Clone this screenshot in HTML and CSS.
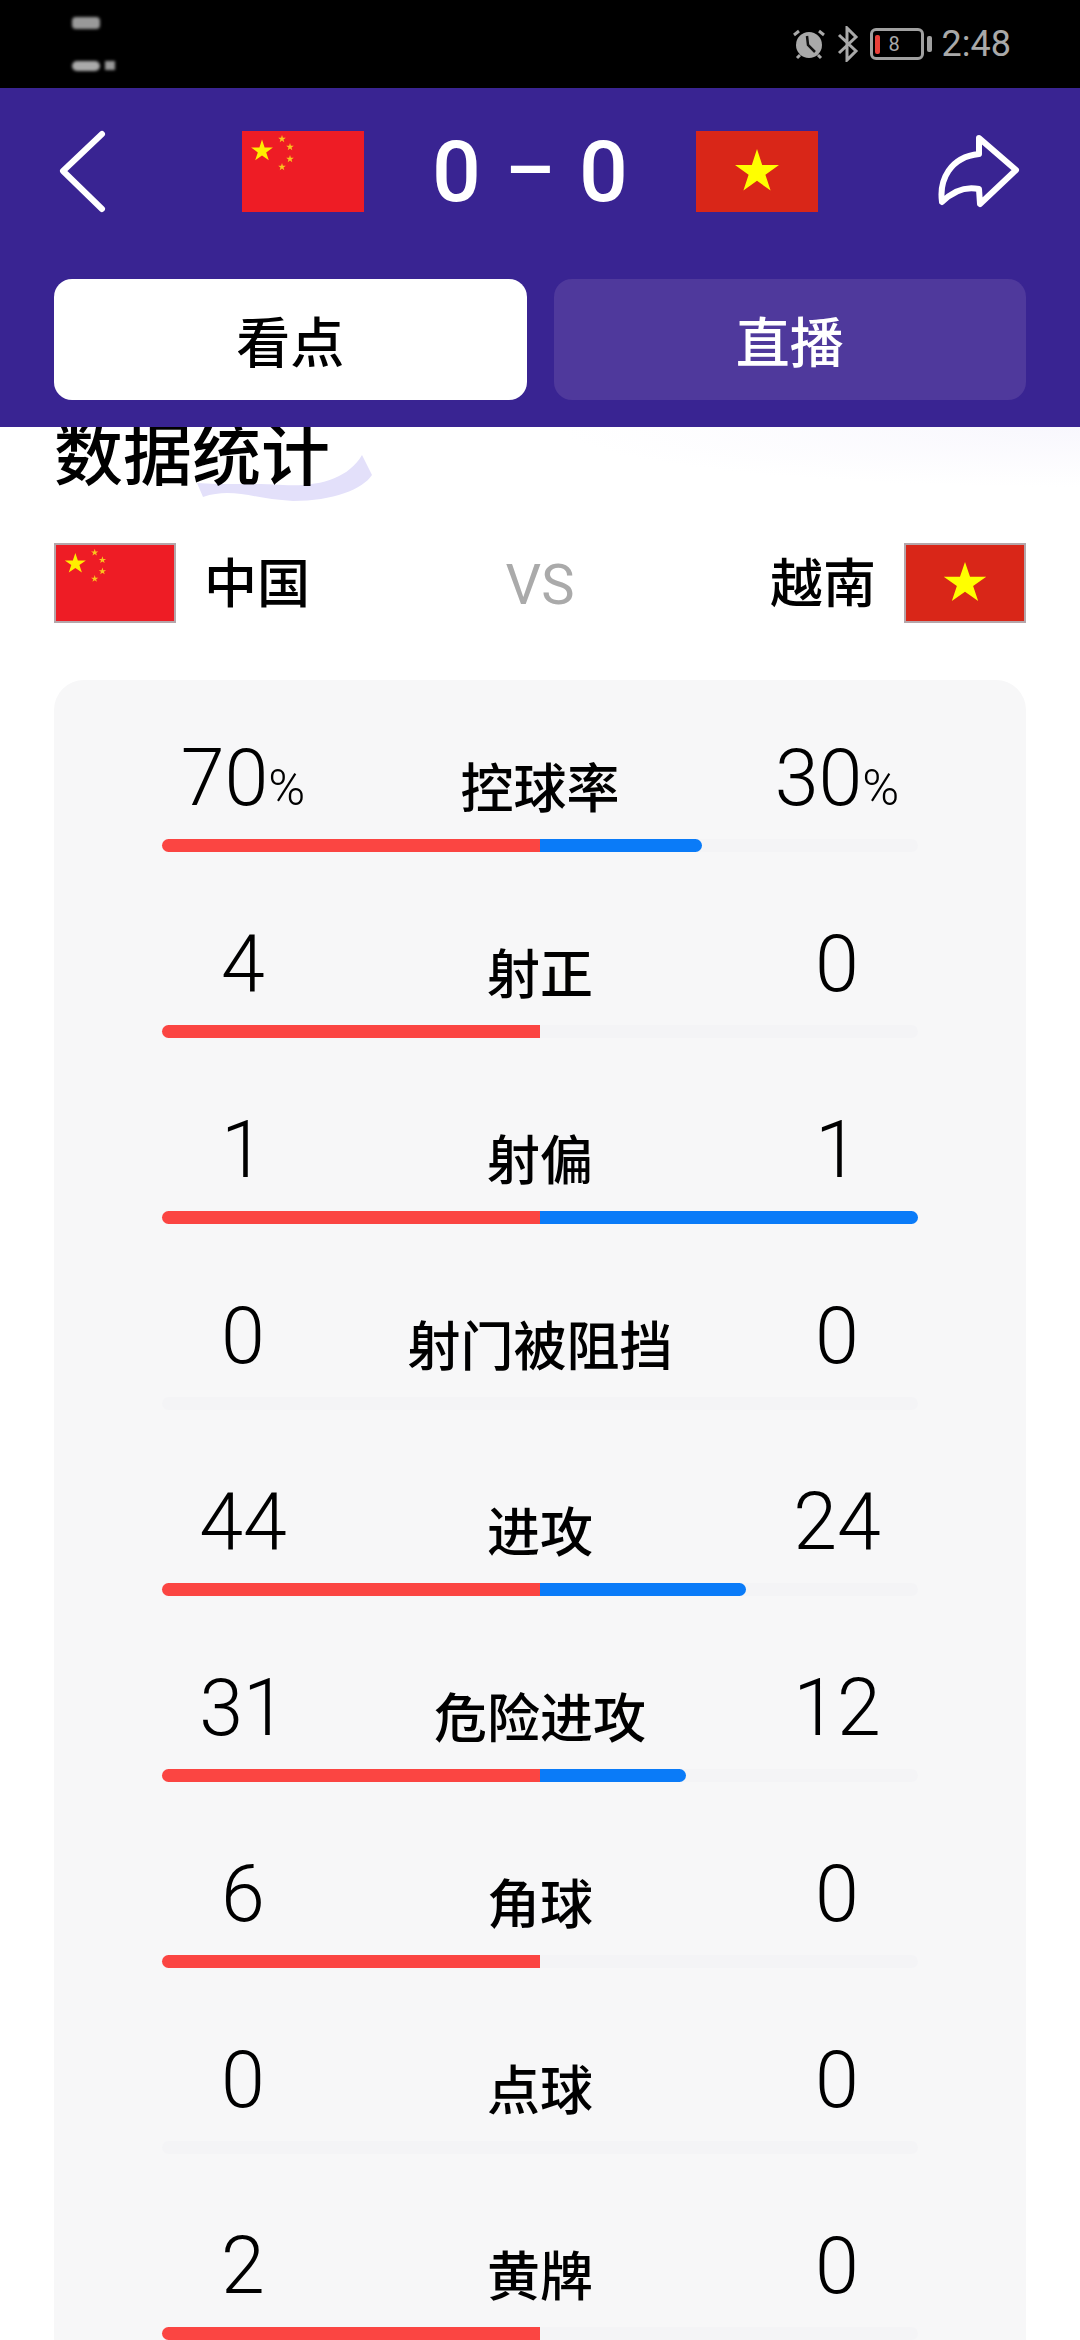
FILE: index.html
```html
<!DOCTYPE html>
<html lang="zh-CN">
  <head>
    <meta charset="UTF-8" />
    <meta name="viewport" content="width=device-width, initial-scale=1.0" />
    <title>数据统计</title>
    <link rel="stylesheet" href="styles.css">
  </head>
  <body>
    <svg class="defs" width="0" height="0">
      <symbol id="flag-cn" viewBox="0 0 122 81" preserveAspectRatio="none">
        <rect width="122" height="81" fill="#ee1c25" />
        <polygon fill="#ffee00" points="20,8.5 22.6,16.4 30.9,16.4 24.2,21.4 26.8,29.3 20,24.4 13.2,29.3 15.8,21.4 9.1,16.4 17.4,16.4" />
        <polygon fill="#f9c51e" points="40,4 40.9,6.8 43.8,6.8 41.5,8.5 42.3,11.3 40,9.6 37.7,11.3 38.5,8.5 36.2,6.8 39.1,6.8" />
        <polygon fill="#f9c51e" points="48,12 48.9,14.8 51.8,14.8 49.5,16.5 50.3,19.3 48,17.6 45.7,19.3 46.5,16.5 44.2,14.8 47.1,14.8" />
        <polygon fill="#f9c51e" points="48,24 48.9,26.8 51.8,26.8 49.5,28.5 50.3,31.3 48,29.6 45.7,31.3 46.5,28.5 44.2,26.8 47.1,26.8" />
        <polygon fill="#f9c51e" points="40,32 40.9,34.8 43.8,34.8 41.5,36.5 42.3,39.3 40,37.6 37.7,39.3 38.5,36.5 36.2,34.8 39.1,34.8" />
      </symbol>
      <symbol id="flag-vn" viewBox="0 0 122 81" preserveAspectRatio="none">
        <rect width="122" height="81" fill="#d92618" />
        <polygon fill="#ffff00" points="61,18 66.2,33.9 83,33.9 69.4,43.7 74.6,59.6 61,49.8 47.4,59.6 52.6,43.7 39,33.9 55.8,33.9" />
      </symbol>
    </svg>

    <div class="status-bar">
      <div class="notify">
        <div class="notify-top"></div>
        <div class="notify-bottom">
          <div class="notify-pill"></div>
          <div class="notify-dot"></div>
        </div>
      </div>
      <div class="status-right">
        <svg class="alarm" width="34" height="32" viewBox="0 0 34 32">
          <circle cx="17" cy="17" r="13" fill="#a9a9a9" />
          <path d="M15 8 L16 17 L23 24" fill="none" stroke="#111" stroke-width="2.5" />
          <path d="M2 7 L7 3 M32 7 L27 3 M5 30 L8 27 M29 30 L26 27" fill="none" stroke="#a9a9a9" stroke-width="3" />
        </svg>
        <svg class="bt" width="22" height="36" viewBox="0 0 22 36">
          <path d="M2 9 L19 25 L10 34 L10 2 L19 11 L2 27" fill="none" stroke="#a9a9a9" stroke-width="3" />
        </svg>
        <div class="battery">
          <div class="battery-level"></div>
          <div class="battery-num">8</div>
        </div>
        <div class="battery-nub"></div>
        <div class="clock">2:48</div>
      </div>
    </div>

    <div class="header">
      <div class="score-row">
        <svg class="back" width="70" height="81" viewBox="0 0 70 81">
          <path d="M48 3 L9 40 L48 78" fill="none" stroke="#fff" stroke-width="6" stroke-linecap="round" stroke-linejoin="round" />
        </svg>
        <div class="score-group">
          <svg class="score-flag" width="122" height="81"><use href="#flag-cn" /></svg>
          <div class="score"><span>0</span><span class="dash">–</span><span>0</span></div>
          <svg class="score-flag" width="122" height="81"><use href="#flag-vn" /></svg>
        </div>
        <svg class="share" width="90" height="81" viewBox="0 0 90 81">
          <path d="M43 7 L80 39 L44 73 L43 58 C29 55 16 61 6 71 C3 49 14 26 43 23 Z" fill="none" stroke="#fff" stroke-width="6" stroke-linejoin="round" />
        </svg>
      </div>
      <div class="tabs">
        <div class="tab active">看点</div>
        <div class="tab">直播</div>
      </div>
    </div>

    <div class="content">
      <div class="section-title">
        <svg class="swoosh" width="190" height="50" viewBox="0 0 190 50">
          <path d="M4 28 L10 42 C40 32 60 44 100 46 C140 46 170 34 179 20 L169 0 C155 24 125 32 90 30 C50 28 30 30 4 28 Z" fill="#e3e0fa" />
        </svg>
        <h2>数据统计</h2>
      </div>

      <div class="teams">
        <div class="team">
          <svg class="team-flag" width="122" height="80"><use href="#flag-cn" /></svg>
          <span class="team-name">中国</span>
        </div>
        <div class="vs">VS</div>
        <div class="team team-right">
          <span class="team-name">越南</span>
          <svg class="team-flag" width="122" height="80"><use href="#flag-vn" /></svg>
        </div>
      </div>

      <div class="stats">
        <div class="stat-row">
          <div class="num">70<small>%</small></div>
          <div class="label">控球率</div>
          <div class="num">30<small>%</small></div>
          <div class="bar">
            <div class="half left"><div class="fill-home" style="width: 100%"></div></div>
            <div class="half"><div class="fill-away" style="width: 42.9%"></div></div>
          </div>
        </div>
        <div class="stat-row">
          <div class="num">4</div>
          <div class="label">射正</div>
          <div class="num">0</div>
          <div class="bar">
            <div class="half left"><div class="fill-home" style="width: 100%"></div></div>
            <div class="half"></div>
          </div>
        </div>
        <div class="stat-row">
          <div class="num">1</div>
          <div class="label">射偏</div>
          <div class="num">1</div>
          <div class="bar">
            <div class="half left"><div class="fill-home" style="width: 100%"></div></div>
            <div class="half"><div class="fill-away" style="width: 100%"></div></div>
          </div>
        </div>
        <div class="stat-row">
          <div class="num">0</div>
          <div class="label">射门被阻挡</div>
          <div class="num">0</div>
          <div class="bar">
            <div class="half left"></div>
            <div class="half"></div>
          </div>
        </div>
        <div class="stat-row">
          <div class="num">44</div>
          <div class="label">进攻</div>
          <div class="num">24</div>
          <div class="bar">
            <div class="half left"><div class="fill-home" style="width: 100%"></div></div>
            <div class="half"><div class="fill-away" style="width: 54.5%"></div></div>
          </div>
        </div>
        <div class="stat-row">
          <div class="num">31</div>
          <div class="label">危险进攻</div>
          <div class="num">12</div>
          <div class="bar">
            <div class="half left"><div class="fill-home" style="width: 100%"></div></div>
            <div class="half"><div class="fill-away" style="width: 38.7%"></div></div>
          </div>
        </div>
        <div class="stat-row">
          <div class="num">6</div>
          <div class="label">角球</div>
          <div class="num">0</div>
          <div class="bar">
            <div class="half left"><div class="fill-home" style="width: 100%"></div></div>
            <div class="half"></div>
          </div>
        </div>
        <div class="stat-row">
          <div class="num">0</div>
          <div class="label">点球</div>
          <div class="num">0</div>
          <div class="bar">
            <div class="half left"></div>
            <div class="half"></div>
          </div>
        </div>
        <div class="stat-row">
          <div class="num">2</div>
          <div class="label">黄牌</div>
          <div class="num">0</div>
          <div class="bar">
            <div class="half left"><div class="fill-home" style="width: 100%"></div></div>
            <div class="half"></div>
          </div>
        </div>
      </div>
    </div>
  </body>
</html>
```

FILE: styles.css
```css
* {
  margin: 0;
  padding: 0;
  box-sizing: border-box;
}

html,
body {
  height: 2340px;
  overflow: hidden;
}

body {
  width: 1080px;
  background: white;
  color: black;
  font-family: Roboto, "Noto Sans CJK SC", sans-serif;
  display: flex;
  flex-direction: column;
}

.defs {
  display: block;
  height: 0;
  flex: none;
}

/* status bar */

.status-bar {
  height: 88px;
  flex: none;
  background: black;
  display: flex;
  align-items: center;
  justify-content: space-between;
  padding: 0 69px 0 72px;
}

.notify {
  width: 46px;
  height: 54px;
  display: flex;
  flex-direction: column;
  justify-content: space-between;
  filter: blur(1.5px);
}

.notify-top {
  width: 28px;
  height: 12px;
  background: #999;
  border-radius: 4px;
}

.notify-bottom {
  display: flex;
  gap: 5px;
}

.notify-pill {
  width: 28px;
  height: 10px;
  background: #aaa;
  border-radius: 5px;
}

.notify-dot {
  width: 10px;
  height: 9px;
  background: #999;
}

.status-right {
  display: flex;
  align-items: center;
}

.alarm {
  margin-right: 11px;
}

.bt {
  margin-right: 11px;
}

.battery {
  width: 54px;
  height: 32px;
  border: 3px solid #a0a0a0;
  border-radius: 6px;
  display: flex;
  align-items: center;
  padding-left: 2px;
  margin-right: 3px;
}

.battery-level {
  width: 5px;
  height: 19px;
  background: #e8403a;
  border-radius: 2px;
}

.battery-num {
  font-size: 20px;
  color: #a9a9a9;
  margin-left: 9px;
}

.battery-nub {
  width: 5px;
  height: 16px;
  background: #a0a0a0;
  border-radius: 2px;
  margin-right: 10px;
}

.clock {
  font-size: 36px;
  color: #a9a9a9;
}

/* header */

.header {
  height: 339px;
  flex: none;
  background: #392492;
  padding: 43px 54px 0;
  position: relative;
  z-index: 2;
}

.score-row {
  display: flex;
  justify-content: space-between;
  height: 81px;
}

.back,
.share {
  overflow: visible;
}

.score-group {
  display: flex;
  align-items: center;
}

.score {
  width: 332px;
  display: flex;
  align-items: center;
  justify-content: center;
  gap: 24px;
  color: white;
  font-size: 86px;
  line-height: 81px;
  font-weight: 500;
}

.dash {
  font-size: 78px;
  margin-top: -2px;
}

.tabs {
  display: flex;
  gap: 27px;
  margin-top: 67px;
}

.tab {
  flex: 1;
  height: 121px;
  border-radius: 18px;
  background: #4f399c;
  color: white;
  font-size: 54px;
  font-family: "Noto Sans CJK SC", sans-serif;
  font-weight: 500;
  display: flex;
  align-items: center;
  justify-content: center;
}

.tab.active {
  background: white;
  color: black;
}

/* content */

.content {
  flex: 1;
  min-height: 0;
  overflow: hidden;
  background: radial-gradient(ellipse 520px 60px at 100% 0, #f8f7fd, white);
}

.section-title {
  position: relative;
  margin: -11px 54px 0;
  height: 72px;
}

.section-title h2 {
  position: relative;
  font-size: 69px;
  line-height: 69px;
  font-weight: 500;
  font-family: "Noto Sans CJK SC", sans-serif;
}

.swoosh {
  position: absolute;
  left: 139px;
  top: 39px;
  overflow: visible;
}

.teams {
  display: grid;
  grid-template-columns: 1fr auto 1fr;
  align-items: center;
  margin: 54px 54px 58px;
  height: 80px;
  font-family: "Noto Sans CJK SC", sans-serif;
  font-size: 53px;
  font-weight: 500;
}

.team {
  display: flex;
  align-items: center;
  gap: 28px;
}

.team-right {
  justify-content: flex-end;
}

.team-name {
  padding-bottom: 5px;
}

.team-flag {
  border: 2px solid #b5a6aa;
}

.vs {
  font-family: Roboto, sans-serif;
  font-size: 56px;
  font-weight: 400;
  color: #aaa;
  padding-top: 4px;
}

.stats {
  margin: 0 54px;
  padding: 58px 108px 0;
  background: #f7f7f8;
  border-radius: 30px 30px 0 0;
  height: 1700px;
}

.stat-row {
  display: grid;
  grid-template-columns: 162px 1fr 162px;
  grid-template-rows: 80px 13px;
  row-gap: 21px;
  align-items: start;
  height: 186px;
}

.num {
  text-align: center;
  font-size: 79px;
  line-height: 80px;
  font-weight: 300;
}

.num small {
  font-size: 50px;
}

.label {
  text-align: center;
  font-family: "Noto Sans CJK SC", sans-serif;
  font-size: 53px;
  font-weight: 500;
  line-height: 80px;
  white-space: nowrap;
  margin-top: 7px;
}

.bar {
  grid-column: 1 / -1;
  align-self: stretch;
  background: #f4f4f6;
  border-radius: 7px;
  display: flex;
}

.half {
  flex: 1;
  display: flex;
}

.half.left {
  justify-content: flex-end;
}

.fill-home {
  background: #fb4542;
  border-radius: 7px 0 0 7px;
}

.fill-away {
  background: #0a7bf8;
  border-radius: 0 7px 7px 0;
}
```
